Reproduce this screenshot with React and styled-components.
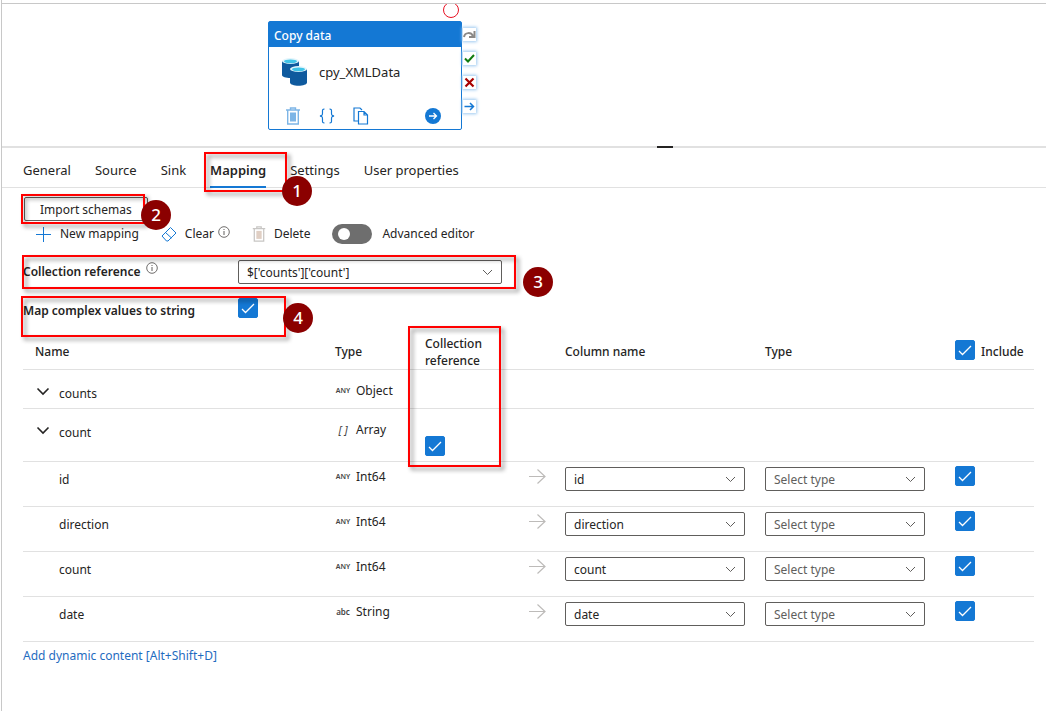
import React from 'react';
import styled, { createGlobalStyle } from 'styled-components';

const blue = '#1478d4';
const line = '#e1e1e1';

const GlobalStyle = createGlobalStyle`
  * {
    box-sizing: border-box;
  }

  body {
    margin: 0;
    background: #fff;
    color: #252423;
    font-family: "Noto Sans", "Open Sans", sans-serif;
    font-size: 13px;
    line-height: 20px;
  }

  button, select, input {
    margin: 0;
    color: inherit;
    font: inherit;
  }
`;

const Page = styled.div`
  min-height: 100vh;
  margin-left: 1px;
  padding-top: 3px;
  border-left: 1px solid #c8c8c8;
`;

const Canvas = styled.section`
  position: relative;
  height: 143px;
  overflow: hidden;
  border-top: 1px solid #c8c8c8;
`;

const Activity = styled.div`
  position: absolute;
  top: 17px;
  left: 266px;
  width: 194px;
  height: 109px;
  display: flex;
  flex-direction: column;
  border: 1px solid ${blue};
  border-radius: 2px;
  background: #fff;
`;

const ActivityHeader = styled.div`
  padding: 4px 5px 1px;
  background: ${blue};
  color: #fff;
  font-size: 12px;
  font-weight: 500;
`;

const ActivityBody = styled.div`
  display: flex;
  flex: 1;
  align-items: center;
  gap: 11px;
  padding: 0 13px 10px;
`;

const ActivityActions = styled.div`
  display: flex;
  gap: 16px;
  padding: 0 15px 4px;
`;

const IconButton = styled.button`
  display: flex;
  padding: 0;
  border: 0;
  background: none;

  &:last-child {
    margin-left: auto;
  }
`;

const Outcomes = styled.div`
  position: absolute;
  top: 24px;
  left: 461px;
  display: flex;
  flex-direction: column;
  gap: 11px;
`;

const Outcome = styled.span`
  display: flex;
  width: 13px;
  height: 13px;
  background: #fff;
  box-shadow: 0 0 3px 1px #9cc9f0;
`;

const Breakpoint = styled.span`
  position: absolute;
  top: -2px;
  left: 441px;
  width: 16px;
  height: 16px;
  border: 1px solid #e81123;
  border-radius: 50%;
`;

const Splitter = styled.div`
  display: flex;
  justify-content: center;
  height: 2px;
  padding-left: 282px;
  background: ${line};
`;

const Handle = styled.span`
  width: 16px;
  background: #252423;
`;

const Tabs = styled.nav`
  display: flex;
  gap: 24px;
  height: 40px;
  padding: 0 21px;
  border-bottom: 1px solid ${line};
`;

const Tab = styled.button`
  position: relative;
  height: 40px;
  padding: 6px 0 1px;
  border: 0;
  border-bottom: 2px solid ${({ $active }) => ($active ? blue : 'transparent')};
  background: none;
  font-weight: ${({ $active }) => ($active ? 600 : 400)};
  white-space: nowrap;
`;

const Panel = styled.main`
  padding: 9px 12px 24px 21px;
  font-size: 12px;
  line-height: 22px;
`;

const ImportButton = styled.button`
  position: relative;
  display: block;
  height: 24px;
  margin-left: 1px;
  padding: 1px 15px 0;
  border: 1px solid #605e5c;
  border-radius: 2px;
  background: #fff;
`;

const Toolbar = styled.div`
  display: flex;
  align-items: center;
  gap: 22px;
  height: 26px;
  padding-left: 12px;
`;

const Tool = styled.button`
  display: flex;
  align-items: center;
  gap: 8px;
  padding: 0;
  border: 0;
  background: none;
  white-space: nowrap;
`;

const Hinted = styled.span`
  display: flex;
  align-items: flex-start;
  gap: 4px;

  svg {
    margin-top: 3px;
  }
`;

const ToggleLabel = styled.label`
  display: flex;
  align-items: center;
  gap: 10px;
`;

const Toggle = styled.input`
  appearance: none;
  display: flex;
  align-items: center;
  width: 40px;
  height: 20px;
  padding: 0 6px;
  border-radius: 10px;
  background: #6e6e6e;

  &::before {
    content: '';
    width: 12px;
    height: 12px;
    border-radius: 50%;
    background: #fff;
  }

  &:checked {
    justify-content: flex-end;
    background: ${blue};
  }
`;

const Field = styled.div`
  position: relative;
  display: flex;
  align-items: ${({ $top }) => ($top ? 'flex-start' : 'center')};
  width: ${({ $width }) => $width}px;
  height: ${({ $height }) => $height}px;
  margin-top: ${({ $gap }) => $gap}px;
  line-height: ${({ $top }) => ($top ? 26 : 20)}px;
`;

const FieldLabel = styled.label`
  display: flex;
  gap: 5px;
  width: 215px;
  font-weight: 600;
  white-space: nowrap;
`;

const SelectWrap = styled.span`
  display: grid;
  align-items: center;
  width: ${({ $width }) => $width}px;

  > * {
    grid-area: 1 / 1;
  }

  svg {
    justify-self: end;
    margin-right: 9px;
    pointer-events: none;
  }
`;

const SelectBox = styled.select`
  appearance: none;
  width: 100%;
  height: 24px;
  padding: 1px 8px 0;
  border: 1px solid #605e5c;
  border-radius: 2px;
  background: #fff;
  color: ${({ $muted }) => ($muted ? '#605e5c' : 'inherit')};
  line-height: 20px;
`;

const CheckWrap = styled.span`
  display: inline-grid;
  width: 20px;
  height: 20px;
  vertical-align: top;

  > * {
    grid-area: 1 / 1;
  }

  svg {
    pointer-events: none;
  }
`;

const CheckInput = styled.input`
  appearance: none;
  width: 20px;
  height: 20px;
  border: 1px solid ${blue};
  border-radius: 2px;

  &:checked {
    background: ${blue};
  }
`;

const Table = styled.table`
  width: 100%;
  border-spacing: 0;
  table-layout: fixed;
`;

const Th = styled.th`
  position: relative;
  width: ${({ $width }) => ($width ? `${$width}px` : 'auto')};
  height: 36px;
  padding: 0 0 0 ${({ $indent }) => $indent || 0}px;
  border-bottom: 1px solid ${line};
  font-weight: 500;
  line-height: 17px;
  text-align: left;
`;

const IncludeLabel = styled.label`
  display: flex;
  gap: 6px;
  line-height: 24px;
`;

const Row = styled.tr`
  height: ${({ $height }) => $height}px;
`;

const Td = styled.td`
  padding: ${({ $top }) => $top || 0}px 0 0;
  border-bottom: 1px solid ${line};
  vertical-align: top;
`;

const Name = styled.div`
  display: flex;
  padding-left: ${({ $leaf }) => ($leaf ? 36 : 12)}px;
`;

const Expander = styled.button`
  display: flex;
  width: 24px;
  padding: 0;
  border: 0;
  background: none;
`;

const TypeCell = styled.div`
  display: flex;
  align-items: center;
  gap: 5px;
`;

const TypeTag = styled.span`
  width: 16px;
  color: #444;
  font-size: ${({ $kind }) => ($kind === 'ANY' ? 7 : 8)}px;
  font-weight: 600;
  line-height: 20px;
  text-align: center;
`;

const ArrayTag = styled(TypeTag)`
  font-size: 11px;
  font-style: italic;
  font-weight: 400;
  white-space: nowrap;
`;

const DynamicLink = styled.a`
  display: inline-block;
  margin-top: 3px;
  color: #1f6cbf;
  text-decoration: none;
`;

// red annotation frame, placed over the part it points at
const Frame = styled.span`
  position: absolute;
  z-index: 1;
  top: ${({ $top }) => $top}px;
  left: ${({ $left }) => $left}px;
  width: ${({ $width }) => $width}px;
  height: ${({ $height }) => $height}px;
  border: 2px solid #f00;
  filter: drop-shadow(3px 3px 2px rgba(0, 0, 0, 0.45));
  pointer-events: none;
`;

const Badge = styled.span`
  position: absolute;
  z-index: 2;
  top: ${({ $top }) => $top}px;
  left: ${({ $left }) => $left}px;
  width: 30px;
  height: 30px;
  border-radius: 50%;
  background: #8b0000;
  color: #fff;
  font-size: 17px;
  font-weight: 500;
  line-height: 30px;
  text-align: center;
`;

const Svg = ({ w, h = w, color = blue, width = 1, children }) => (
  <svg width={w} height={h} viewBox={`0 0 ${w} ${h}`} fill="none" stroke={color} strokeWidth={width} aria-hidden="true">
    {children}
  </svg>
);

const Info = () => (
  <Svg w={12} color="#605e5c">
    <circle cx="6" cy="6" r="5.3" strokeWidth="0.9" />
    <path d="M6 5v4M6 3v1" />
  </Svg>
);

const Trash = ({ color, fill, w = 14, h = 18 }) => (
  <svg width={w} height={h} viewBox="0 0 14 18" fill="none" stroke={color} strokeWidth="1.4" aria-hidden="true">
    <path d="M0 3h14M4.500 3V1h5v2M1.700 3v14h10.600V3" />
    <path d="M4 5.500h6v9H4z" fill={fill} stroke="none" />
  </svg>
);

const Database = () => (
  <Svg w={26} h={28} color="none">
    <path d="M0 3v14c0 2 4 3 8.500 3s8.500-1 8.500-3V3z" fill="#0f5a9e" />
    <ellipse cx="8.500" cy="3" rx="8.500" ry="3" fill="#e3f5fb" />
    <ellipse cx="8.500" cy="3.300" rx="6.500" ry="1.900" fill="#40c4e8" />
    <path d="M8 11v13.500c0 2 4 3.200 8.500 3.200s8.500-1.200 8.500-3.200V11z" fill="#0f5a9e" />
    <ellipse cx="16.500" cy="11" rx="8.500" ry="3" fill="#e3f5fb" />
    <ellipse cx="16.500" cy="11.300" rx="6.500" ry="1.900" fill="#40c4e8" />
  </Svg>
);

const Check = ({ id, label }) => (
  <CheckWrap>
    <CheckInput type="checkbox" id={id} aria-label={label} defaultChecked />
    <Svg w={20} color="#fff" width={1.3}>
      <path d="M4 11l3.500 3.500L16 6" />
    </Svg>
  </CheckWrap>
);

const Select = ({ id, label, value, width, muted }) => (
  <SelectWrap $width={width}>
    <SelectBox id={id} aria-label={label} $muted={muted}>
      <option>{value}</option>
    </SelectBox>
    <Svg w={11} h={7} color="#605e5c">
      <path d="M1 1l4.500 4.500L10 1" />
    </Svg>
  </SelectWrap>
);

const Type = ({ tag, name }) => (
  <TypeCell>
    {tag === '[ ]' ? <ArrayTag>{tag}</ArrayTag> : <TypeTag $kind={tag}>{tag}</TypeTag>}
    {name}
  </TypeCell>
);

const groups = [
  { name: 'counts', tag: 'ANY', type: 'Object', height: 39 },
  { name: 'count', tag: '[ ]', type: 'Array', height: 53, collection: true },
];

const columns = [
  { name: 'id', tag: 'ANY', type: 'Int64' },
  { name: 'direction', tag: 'ANY', type: 'Int64' },
  { name: 'count', tag: 'ANY', type: 'Int64' },
  { name: 'date', tag: 'abc', type: 'String' },
];

const tabs = ['General', 'Source', 'Sink', 'Mapping', 'Settings', 'User properties'];

const CopyActivity = () => (
  <Canvas>
    <Breakpoint />
    <Activity>
      <ActivityHeader>Copy data</ActivityHeader>
      <ActivityBody>
        <Database />
        cpy_XMLData
      </ActivityBody>
      <ActivityActions>
        <IconButton aria-label="Delete activity">
          <Trash color="#7db5e6" fill="#7db5e6" w={18} />
        </IconButton>
        <IconButton aria-label="View code">
          <Svg w={18} width={1.2}>
            <path d="M6.500 2C4 2 4.500 3.500 4.500 6S4 8.500 2 9c2 .5 2.500.5 2.500 3S4 16 6.500 16M11.500 2c2.500 0 2 1.500 2 4s.5 2.500 2.500 3c-2 .5-2.500.5-2.500 3s.5 4-2 4" />
          </Svg>
        </IconButton>
        <IconButton aria-label="Clone">
          <Svg w={18} width={1.2}>
            <path d="M6 14H2V1h6l2 2M6.500 4.500h5.500l3.500 3.500v9h-9zM12 4.500V8h3.500" />
          </Svg>
        </IconButton>
        <IconButton aria-label="Run">
          <Svg w={26} h={18} color="#fff" width={1.3}>
            <circle cx="13" cy="9" r="8" fill={blue} stroke="none" />
            <path d="M9 9h7.500M13.500 6l3 3-3 3" />
          </Svg>
        </IconButton>
      </ActivityActions>
    </Activity>
    <Outcomes>
      <Outcome>
        <Svg w={13} color="#8a8886" width={2}>
          <path d="M1 9c1-5 7-5 9-1M11.500 3v6H6" />
        </Svg>
      </Outcome>
      <Outcome>
        <Svg w={13} color="#107c10" width={2}>
          <path d="M2 6.500L5 9.500 11 3" />
        </Svg>
      </Outcome>
      <Outcome>
        <Svg w={13} color="#a80000" width={2.2}>
          <path d="M2.500 2.500l8 8M10.500 2.500l-8 8" />
        </Svg>
      </Outcome>
      <Outcome>
        <Svg w={13} width={1.5}>
          <path d="M1.500 6.500h9M7 3l3.500 3.500L7 10" />
        </Svg>
      </Outcome>
    </Outcomes>
  </Canvas>
);

const MappingTable = () => (
  <Table>
    <thead>
      <tr>
        <Th $indent={12}>Name</Th>
        <Th $width={90}>Type</Th>
        <Th $width={104}>
          Collection<br />reference
          <Frame $top={-8} $left={-17} $width={93} $height={141} />
        </Th>
        <Th $width={36} aria-label="Maps to" />
        <Th $width={200}>Column name</Th>
        <Th $width={190}>Type</Th>
        <Th $width={79}>
          <IncludeLabel htmlFor="include-all">
            <Check id="include-all" />
            Include
          </IncludeLabel>
        </Th>
      </tr>
    </thead>
    <tbody>
      {groups.map(row => (
        <Row key={row.name} $height={row.height}>
          <Td $top={13}>
            <Name>
              <Expander aria-label={`Collapse ${row.name}`}>
                <Svg w={16} color="#252423" width={1.6}>
                  <path d="M2.500 5.500L8 11l5.500-5.500" />
                </Svg>
              </Expander>
              {row.name}
            </Name>
          </Td>
          <Td $top={10}><Type tag={row.tag} name={row.type} /></Td>
          <Td $top={row.collection ? 27 : 0}>
            {row.collection && <Check label="Collection reference" />}
          </Td>
          <Td colSpan={4} />
        </Row>
      ))}
      {columns.map(row => (
        <Row key={row.name} $height={45}>
          <Td $top={7}><Name $leaf>{row.name}</Name></Td>
          <Td $top={4}><Type tag={row.tag} name={row.type} /></Td>
          <Td />
          <Td $top={5}>
            <Svg w={18} color="#bdbbb9" width={1.2}>
              <path d="M0 9.500h16M8.500 2.500l7.500 7-7.500 7" />
            </Svg>
          </Td>
          <Td $top={5}><Select label="Column name" value={row.name} width={180} /></Td>
          <Td $top={5}><Select label="Column type" value="Select type" width={160} muted /></Td>
          <Td $top={4}><Check label={`Include ${row.name}`} /></Td>
        </Row>
      ))}
    </tbody>
  </Table>
);

const App = () => (
  <>
    <GlobalStyle />
    <Page>
      <CopyActivity />
      <Splitter><Handle /></Splitter>
      <Tabs>
        {tabs.map(tab => (
          <Tab key={tab} $active={tab === 'Mapping'}>
            {tab}
            {tab === 'Mapping' && (
              <>
                <Frame $top={4} $left={-6} $width={83} $height={40} />
                <Badge $top={28} $left={72}>1</Badge>
              </>
            )}
          </Tab>
        ))}
      </Tabs>
      <Panel>
        <ImportButton>
          Import schemas
          <Frame $top={-4} $left={-4} $width={124} $height={30} />
          <Badge $top={2} $left={116}>2</Badge>
        </ImportButton>
        <Toolbar>
          <Tool>
            <Svg w={17}><path d="M8.500 1v15M1 8.500h15" /></Svg>
            New mapping
          </Tool>
          <Tool>
            <Svg w={16}>
              <path d="M1 10l8.500-8.500 5.500 5.500-8 8H5.500zM4.500 6.500l6 5.500" />
            </Svg>
            <Hinted>
              Clear
              <Info />
            </Hinted>
          </Tool>
          <Tool>
            <Trash color="#c8c6c4" fill="#e0cfc4" h={16} />
            Delete
          </Tool>
          <ToggleLabel>
            <Toggle type="checkbox" />
            Advanced editor
          </ToggleLabel>
        </Toolbar>
        <Field $width={494} $height={34} $gap={8}>
          <FieldLabel htmlFor="collection">
            Collection reference
            <Info />
          </FieldLabel>
          <Select id="collection" value="$['counts']['count']" width={264} />
          <Frame $top={0} $left={-1} $width={494} $height={34} />
          <Badge $top={12} $left={500}>3</Badge>
        </Field>
        <Field $top $width={264} $height={36} $gap={9}>
          <FieldLabel htmlFor="complex">Map complex values to string</FieldLabel>
          <Check id="complex" />
          <Frame $top={-2} $left={-2} $width={265} $height={41} />
          <Badge $top={5} $left={260}>4</Badge>
        </Field>
        <MappingTable />
        <DynamicLink href="#dynamic">Add dynamic content [Alt+Shift+D]</DynamicLink>
      </Panel>
    </Page>
  </>
);

export default App;
